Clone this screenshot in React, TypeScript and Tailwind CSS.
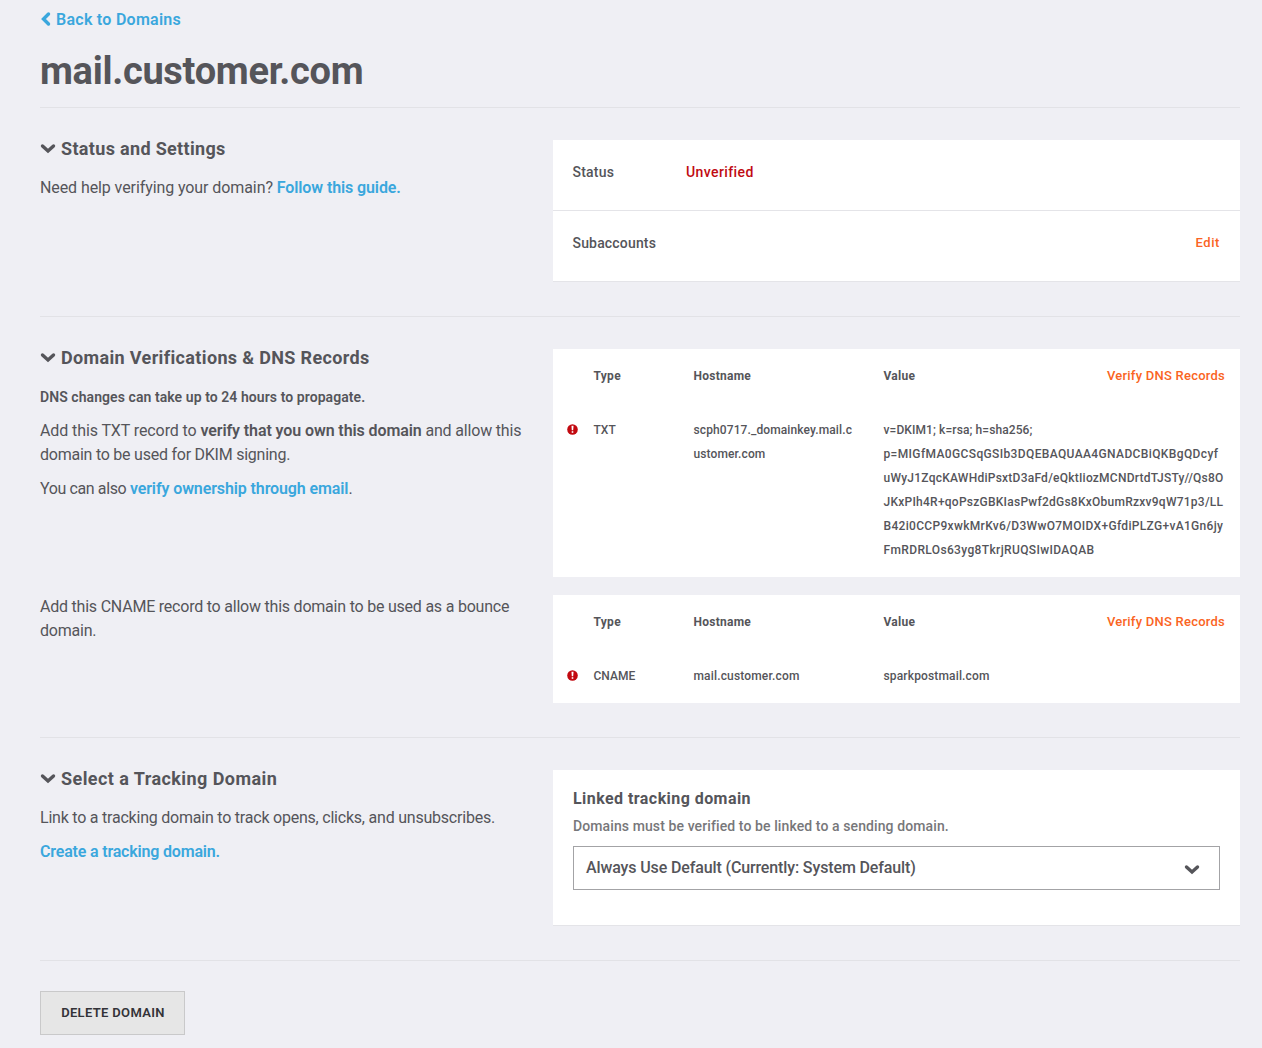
import type { ReactNode } from "react";

function ChevronDown({ className = "" }: { className?: string }) {
  return (
    <svg className={`h-[10px] w-[15px] shrink-0 ${className}`} viewBox="0 0 15 10" fill="none" stroke="currentColor" strokeWidth="3.4" strokeLinecap="round" strokeLinejoin="miter">
      <path d="M2.5 2 8 7 13.5 2" />
    </svg>
  );
}

function ErrorIcon() {
  return (
    <svg className="block h-[11px] w-[11px]" viewBox="0 0 11 11">
      <circle cx="5.5" cy="5.5" r="5.3" fill="#c20910" />
      <path d="M4.5 1.8h2l-.3 4.4H4.8z" fill="#fff" />
      <rect x="4.7" y="7.2" width="1.6" height="1.6" fill="#fff" />
    </svg>
  );
}

function Heading({ children }: { children: ReactNode }) {
  return (
    <h2 className="-mt-[3px] flex items-center text-[18px] leading-[24px] font-bold text-[#55555a]">
      <ChevronDown className="mr-[6px] overflow-visible" />
      {children}
    </h2>
  );
}

function Section({ left, right }: { left: ReactNode; right: ReactNode }) {
  return (
    <section className="flex border-t border-[#e2e2e6] pt-[32px] pb-[34px]">
      <div className="w-[513px] shrink-0">{left}</div>
      <div className="flex-1">{right}</div>
    </section>
  );
}

function DnsCard({ type, host, value, className = "" }: { type: ReactNode; host: ReactNode; value: ReactNode; className?: string }) {
  return (
    <div className={`bg-white pr-[15px] pl-[14px] py-[15px] text-[12px] leading-[24px] font-medium whitespace-nowrap ${className}`}>
      <div className="flex font-bold">
        <div className="ml-[26.5px] w-[100px] tracking-[0.3px]">Type</div>
        <div className="w-[190px] tracking-[0.26px]">Hostname</div>
        <div className="flex-1 tracking-[0.25px]">Value</div>
        <a className="text-[13px] font-medium tracking-[0.24px] text-[#fa6423]">Verify DNS Records</a>
      </div>
      <div className="mt-[30px] flex">
        <div className="flex h-[22px] w-[26.5px] items-center">
          <ErrorIcon />
        </div>
        <div className="w-[100px] tracking-[0.02px]">{type}</div>
        <div className="w-[190px]">{host}</div>
        <div className="flex-1">{value}</div>
      </div>
    </div>
  );
}

export default function App() {
  return (
    <main className="h-[1048px] w-[1262px] overflow-hidden bg-[#efeff4] pl-[40px] pr-[22px] pt-[8px] font-['Roboto',sans-serif] text-[16px] leading-[24px] text-[#55555a]">
      <a className="flex items-center font-semibold tracking-[0.27px] text-[#3aa7dd]">
        <svg className="mr-[5px] h-[16px] w-[11px] -mt-[2px]" viewBox="0 0 11 16" fill="none" stroke="currentColor" strokeWidth="3.4" strokeLinecap="round">
          <path d="M8.5 3 3.5 8 8.5 13" />
        </svg>
        Back to Domains
      </a>
      <h1 className="mt-[16px] mb-[13px] text-[38px] leading-[46px] font-bold tracking-[-0.3px]">mail.customer.com</h1>

      <Section
        left={
          <>
            <Heading><span className="tracking-[0.33px]">Status and Settings</span></Heading>
            <p className="mt-[15px]">
              <span className="tracking-[-0.09px]">Need help verifying your domain? </span>
              <a className="font-semibold tracking-[-0.1px] text-[#3aa7dd]">Follow this guide.</a>
            </p>
          </>
        }
        right={
          <div className="text-[14px] font-medium">
            <div className="flex h-[71px] border-b border-[#e4e4e8] bg-white pr-[20px] pl-[19.5px] pt-[20px]">
              <span className="w-[113.5px] tracking-[0.2px]">Status</span>
              <span className="tracking-[0.4px] text-[#bf0a12]">Unverified</span>
            </div>
            <div className="flex h-[71px] justify-between border-b border-[#e4e4e8] bg-white pr-[20px] pl-[19.5px] pt-[20px]">
              <span className="tracking-[0.17px]">Subaccounts</span>
              <a className="text-[13px] tracking-[0.6px] text-[#fa6423]">Edit</a>
            </div>
          </div>
        }
      />

      <Section
        left={
          <>
            <Heading><span className="tracking-[0.35px]">Domain Verifications &amp; DNS Records</span></Heading>
            <p className="mt-[15px] text-[14px] font-semibold tracking-[0.07px]">DNS changes can take up to 24 hours to propagate.</p>
            <p className="mt-[10px]">
              <span className="tracking-[-0.1px]">Add this TXT record to </span>
              <b className="font-semibold tracking-[-0.1px]">verify that you own this domain</b>
              <span className="tracking-[-0.17px]"> and allow this</span>
              <br />
              <span className="tracking-[-0.24px]">domain to be used for DKIM signing.</span>
            </p>
            <p className="mt-[10px]">
              <span className="tracking-[-0.38px]">You can also </span>
              <a className="font-semibold tracking-[-0.11px] text-[#3aa7dd]">verify ownership through email</a>.
            </p>
            <p className="mt-[94px] tracking-[-0.22px]">
              Add this CNAME record to allow this domain to be used as a bounce
              <br />
              domain.
            </p>
          </>
        }
        right={
          <>
            <DnsCard
              type="TXT"
              host={<span className="tracking-[0.11px]">scph0717._domainkey.mail.c<br />ustomer.com</span>}
              value={
                <>
                  <div className="tracking-[0.1px]">v=DKIM1; k=rsa; h=sha256;</div>
                  <div className="tracking-[0.37px]">p=MIGfMA0GCSqGSIb3DQEBAQUAA4GNADCBiQKBgQDcyf</div>
                  <div className="tracking-[0.24px]">uWyJ1ZqcKAWHdiPsxtD3aFd/eQktIiozMCNDrtdTJSTy//Qs8O</div>
                  <div className="tracking-[0.25px]">JKxPIh4R+qoPszGBKIasPwf2dGs8KxObumRzxv9qW71p3/LL</div>
                  <div className="tracking-[0.32px]">B42i0CCP9xwkMrKv6/D3WwO7MOIDX+GfdiPLZG+vA1Gn6jy</div>
                  <div className="tracking-[0.36px]">FmRDRLOs63yg8TkrjRUQSIwIDAQAB</div>
                </>
              }
            />
            <DnsCard className="mt-[18px]" type="CNAME" host={<span className="tracking-[0.16px]">mail.customer.com</span>} value={<span className="tracking-[0.15px]">sparkpostmail.com</span>} />
          </>
        }
      />

      <Section
        left={
          <>
            <Heading><span className="tracking-[0.43px]">Select a Tracking Domain</span></Heading>
            <p className="mt-[15px] tracking-[-0.22px]">Link to a tracking domain to track opens, clicks, and unsubscribes.</p>
            <p className="mt-[10px]">
              <a className="font-semibold tracking-[-0.18px] text-[#3aa7dd]">Create a tracking domain.</a>
            </p>
          </>
        }
        right={
          <div className="h-[156px] border-b border-[#e4e4e8] bg-white px-[20px] pt-[17px]">
            <h3 className="font-bold tracking-[0.44px]">Linked tracking domain</h3>
            <p className="mt-[3px] text-[14px] font-medium tracking-[0.1px] text-[#77777a]">Domains must be verified to be linked to a sending domain.</p>
            <div className="mt-[8px] flex h-[44px] items-center justify-between border border-[#a3a3a6] pl-[12px] pr-[20px] font-medium tracking-[-0.13px]">
              Always Use Default (Currently: System Default)
              <ChevronDown className="mt-[3px] overflow-visible" />
            </div>
          </div>
        }
      />

      <div className="border-t border-[#e2e2e6] pt-[30px]">
        <button className="flex h-[44px] w-[145px] items-center justify-center border border-[#c9c9ca] bg-[#e6e6e6] pl-[1px] text-[13px] font-semibold tracking-[0.33px] text-[#333338]">DELETE DOMAIN</button>
      </div>
    </main>
  );
}
